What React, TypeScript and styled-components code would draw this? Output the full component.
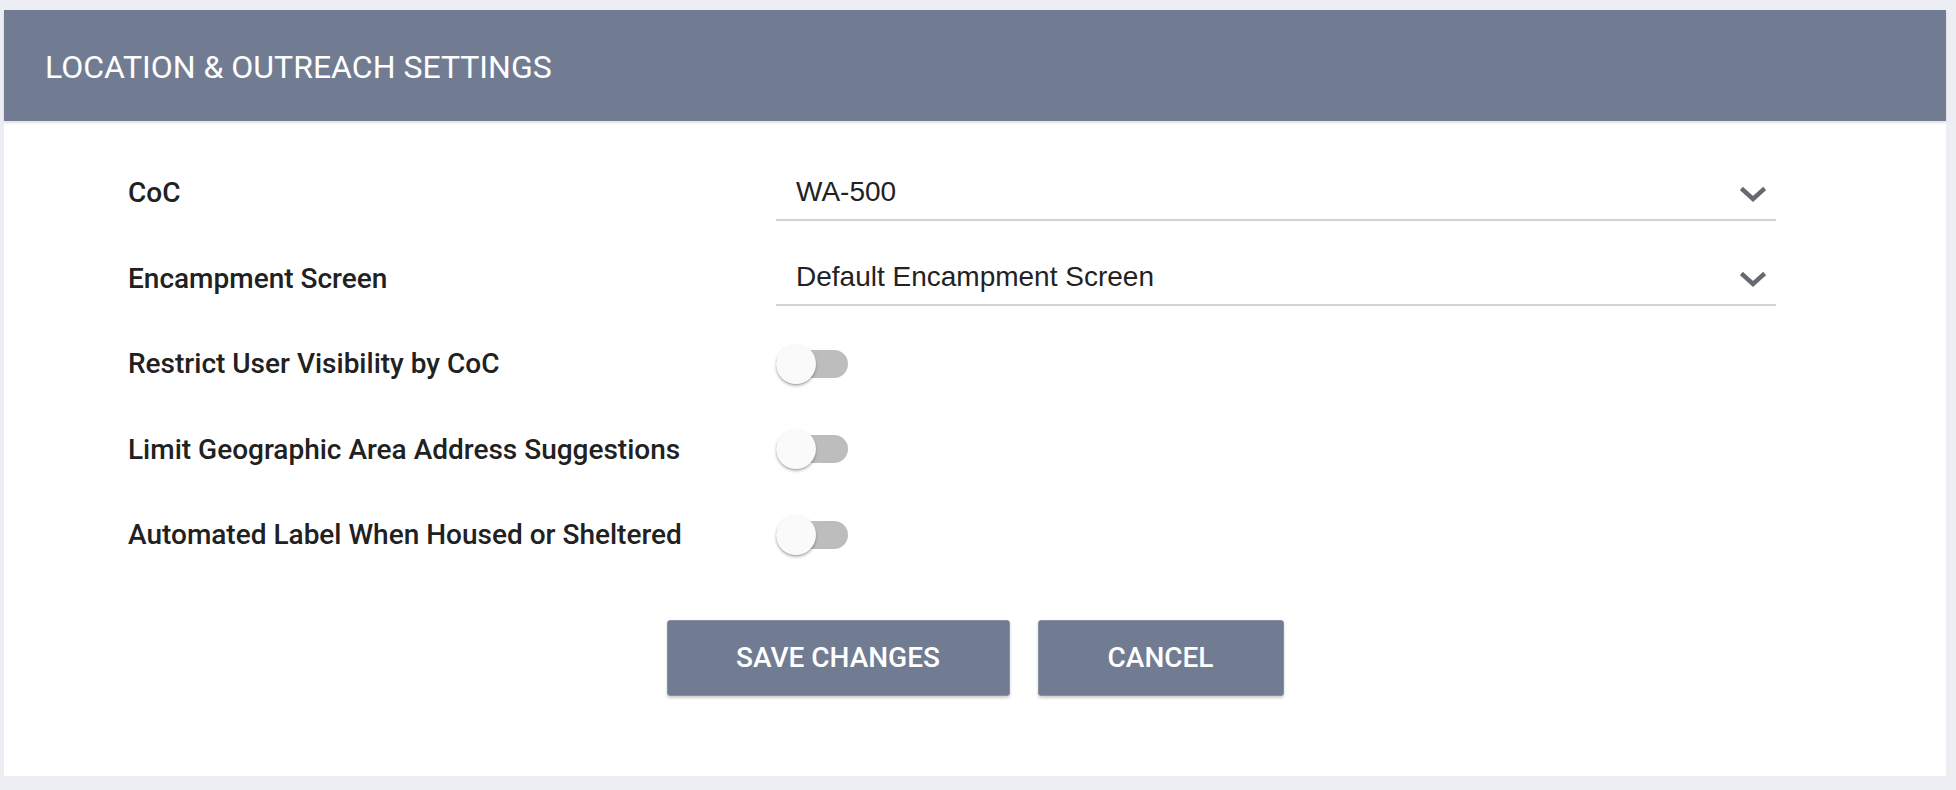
import styled, { createGlobalStyle } from "styled-components";

const GlobalStyle = createGlobalStyle`
  html, body {
    margin: 0;
    padding: 0;
    background: #eceef3;
  }
  body {
    font-family: Roboto, "Liberation Sans", sans-serif;
  }
`;

const Page = styled.div`
  padding: 10px 10px 14px 4px;
`;

const Panel = styled.section`
  background: #ffffff;
  display: flex;
  flex-direction: column;
`;

const Header = styled.header`
  height: 111px;
  background: #717c93;
  display: flex;
  align-items: center;
  padding-left: 41px;
  box-shadow: 0 2px 2px rgba(0, 0, 0, 0.12);
`;

const Title = styled.h1`
  margin: 0;
  margin-top: 2px;
  color: #ffffff;
  font-family: Roboto, sans-serif;
  font-weight: 400;
  font-size: 32px;
  letter-spacing: 0;
`;

const Form = styled.div`
  padding: 29px 0 80px 124px;
  display: flex;
  flex-direction: column;
`;

const Row = styled.div`
  display: grid;
  grid-template-columns: 648px 1000px;
  align-items: center;
  height: 85.5px;
`;

const Label = styled.label`
  font-family: Roboto, sans-serif;
  font-weight: 500;
  font-size: 28px;
  color: #212121;
`;

const SelectBox = styled.div`
  height: 56px;
  box-sizing: border-box;
  border-bottom: 2px solid #d2d2d7;
  display: flex;
  align-items: center;
  justify-content: space-between;
  padding: 0 10px 0 20px;
`;

const SelectValue = styled.span`
  font-family: "Liberation Sans", Arial, sans-serif;
  font-size: 28px;
  color: #222222;
`;

const Chevron = styled.svg`
  width: 26px;
  height: 18px;
  margin-top: 6px;
`;

const Switch = styled.div`
  position: relative;
  width: 72px;
  height: 40px;
  display: flex;
  align-items: center;
`;

const Track = styled.div`
  width: 72px;
  height: 28px;
  border-radius: 14px;
  background: #bdbdbd;
`;

const Thumb = styled.div`
  position: absolute;
  left: 0;
  top: 0;
  width: 40px;
  height: 40px;
  border-radius: 50%;
  background: #fafafa;
  box-shadow: 0 2px 3px rgba(0, 0, 0, 0.25), 0 1px 1px rgba(0, 0, 0, 0.12);
`;

const Actions = styled.div`
  display: flex;
  justify-content: center;
  gap: 28px;
  margin-top: 42px;
  margin-left: -124px;
`;

const Button = styled.button<{ $width: number }>`
  width: ${(p) => p.$width}px;
  height: 76px;
  background: #717c93;
  border: 1px solid #8790a3;
  border-radius: 3px;
  color: #ffffff;
  font-family: Roboto, sans-serif;
  font-weight: 500;
  font-size: 28px;
  text-transform: uppercase;
  box-shadow: 0 2px 3px rgba(0, 0, 0, 0.2);
  cursor: pointer;
`;

function Select({ value }: { value: string }) {
  return (
    <SelectBox>
      <SelectValue>{value}</SelectValue>
      <Chevron viewBox="0 0 26 18">
        <path
          d="M3 4 L13 13 L23 4"
          fill="none"
          stroke="#666a70"
          strokeWidth="4.5"
          strokeLinecap="square"
        />
      </Chevron>
    </SelectBox>
  );
}

function Toggle() {
  return (
    <Switch>
      <Track />
      <Thumb />
    </Switch>
  );
}

const toggles = [
  "Restrict User Visibility by CoC",
  "Limit Geographic Area Address Suggestions",
  "Automated Label When Housed or Sheltered",
];

export default function App() {
  return (
    <>
      <GlobalStyle />
      <Page>
        <Panel>
          <Header>
            <Title>LOCATION &amp; OUTREACH SETTINGS</Title>
          </Header>
          <Form>
            <Row>
              <Label>CoC</Label>
              <Select value="WA-500" />
            </Row>
            <Row>
              <Label>Encampment Screen</Label>
              <Select value="Default Encampment Screen" />
            </Row>
            {toggles.map((t) => (
              <Row key={t}>
                <Label>{t}</Label>
                <Toggle />
              </Row>
            ))}
            <Actions>
              <Button $width={343}>Save Changes</Button>
              <Button $width={246}>Cancel</Button>
            </Actions>
          </Form>
        </Panel>
      </Page>
    </>
  );
}
